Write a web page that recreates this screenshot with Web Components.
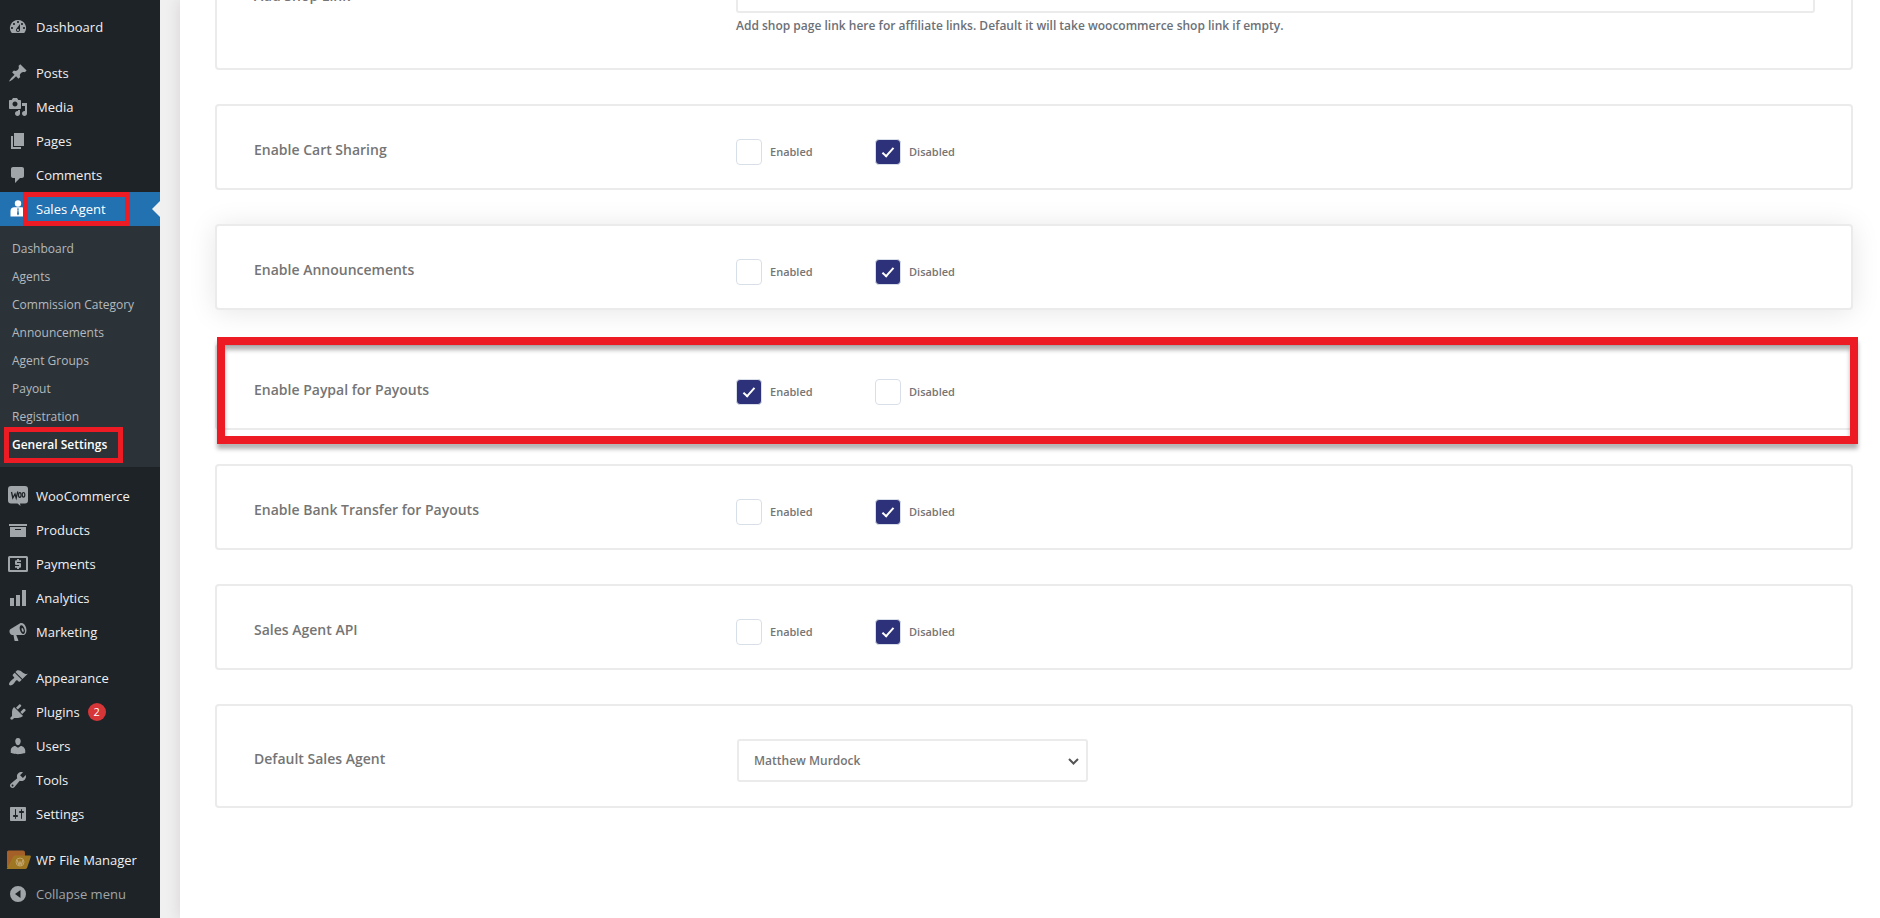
<!DOCTYPE html>
<html lang="en">
<head>
<meta charset="utf-8">
<title>Sales Agent – General Settings</title>
<style>
body { margin: 0; font-family: "Open Sans", "Noto Sans", sans-serif; background: #fff; }
</style>
</head>
<body>
<settings-app></settings-app>

<script>
const ICONS = {
  dashboard: '<path d="M3.76 16h12.48A7.998 7.998 0 0 0 10 3a7.998 7.998 0 0 0-6.24 13zM10 4c.55 0 1 .45 1 1s-.45 1-1 1-1-.45-1-1 .45-1 1-1zM6 6c.55 0 1 .45 1 1s-.45 1-1 1-1-.45-1-1 .45-1 1-1zm8 0c.55 0 1 .45 1 1s-.45 1-1 1-1-.45-1-1 .45-1 1-1zm-5.370 5.550L12 7v6c0 1.100-.9 2-2 2s-2-.9-2-2c0-.57.24-1.080.63-1.450zM4 10c.55 0 1 .45 1 1s-.45 1-1 1-1-.45-1-1 .45-1 1-1zm12 0c.55 0 1 .45 1 1s-.45 1-1 1-1-.45-1-1 .45-1 1-1zm-5 3c0-.55-.45-1-1-1s-1 .45-1 1 .45 1 1 1 1-.45 1-1z"/>',
  post: '<path d="M10.44 3.02l1.82-1.82 6.36 6.35-1.83 1.82c-1.05-.68-2.48-.57-3.41.36l-.75.75c-.92.93-1.04 2.35-.35 3.41l-1.83 1.82-2.41-2.41-2.8 2.79c-.42.42-3.38 2.71-3.8 2.29s1.86-3.39 2.28-3.81l2.79-2.79L4.1 9.36l1.83-1.82c1.05.69 2.48.57 3.4-.36l.75-.75c.93-.92 1.05-2.35.36-3.41z"/>',
  media: '<path fill-rule="evenodd" d="M13 11V4c0-.55-.45-1-1-1h-1.670L9 1H5L3.670 3H2c-.55 0-1 .45-1 1v7c0 .55.450 1 1 1h10c.55 0 1-.45 1-1zM7 4.500c1.380 0 2.500 1.120 2.500 2.500S8.380 9.500 7 9.500 4.500 8.380 4.500 7 5.620 4.500 7 4.500zM14 6h5v10.500c0 1.380-1.120 2.500-2.500 2.500S14 17.880 14 16.500s1.120-2.500 2.500-2.500c.17 0 .34.020.5.050V9h-3V6zm-4 8.050V13h2v3.500c0 1.380-1.120 2.500-2.500 2.500S7 17.880 7 16.500 8.120 14 9.500 14c.17 0 .34.020.5.050z"/>',
  page: '<path d="M6 15V2h10v13H6zm-1 1h8v2H3V5h2v11z"/>',
  comments: '<path d="M5 2h9c1.100 0 2 .9 2 2v7c0 1.100-.9 2-2 2h-2l-5 5v-5H5c-1.100 0-2-.9-2-2V4c0-1.100.9-2 2-2z"/>',
  agent: '<circle cx="10" cy="4.500" r="3.200"/><path fill-rule="evenodd" d="M2.500 17.500v-5.500q0-3.500 4-3.700h7q4 .2 4 3.700v5.500zM9 9.500l.6 1.500-.6 4 1 1.500 1-1.500-.6-4 .6-1.500z"/>',
  woo: '<path fill-rule="evenodd" d="M3 0h14q3 0 3 3v11.500q0 3-3 3h-5l.5 2.500-3-2.500H3q-3 0-3-3V3q0-3 3-3z"/><path fill="none" stroke="#1d2327" stroke-width="1.300" d="M3.500 6l1.300 6 2.200-4 1.200 4L9.800 5.500"/><ellipse fill="none" stroke="#1d2327" stroke-width="1.200" cx="11.800" cy="9" rx="1.300" ry="2.300"/><ellipse fill="none" stroke="#1d2327" stroke-width="1.200" cx="15.500" cy="8.800" rx="1.300" ry="2.300"/>',
  products: '<path d="M19 4v2H1V4h18zM2 7h16v10H2V7zm11 3V9H7v1h6z"/>',
  payments: '<path fill-rule="evenodd" d="M1.500 2h17q1.500 0 1.500 1.500v13q0 1.500-1.500 1.500h-17Q0 18 0 16.500v-13Q0 2 1.500 2zM2 4v12h16V4z"/><path d="M9 5h2v1.300h2v1.700H9v1h3q1 0 1 1v2.700q0 1-1 1h-1V15H9v-1.300H7V12h4v-1H8q-1 0-1-1V7.300q0-1 1-1h1z"/>',
  chart: '<path d="M18 18V2h-4v16h4zm-6 0V7H8v11h4zm-6 0v-8H2v8h4z"/>',
  marketing: '<path fill-rule="evenodd" d="M18.150 5.940c.46 1.620.38 3.220-.02 4.480-.42 1.280-1.260 2.180-2.300 2.480-.16.060-.26.060-.4.060-.06.020-.12.020-.18.020-.06.020-.14.020-.22.020h-6.800l2.220 5.500c.02.140-.06.260-.14.340-.08.100-.24.160-.34.160H6.950c-.1 0-.26-.06-.34-.16-.08-.08-.16-.2-.14-.34l-1-5.500H4.250l-.02-.02c-.5.060-1.080-.18-1.540-.62s-.88-1.080-1.060-1.880c-.24-.8-.2-1.560-.02-2.200.18-.62.580-1.080 1.060-1.300l.02-.02 9-5.400c.1-.06.18-.1.240-.16.06-.04.14-.08.240-.12.16-.08.28-.12.500-.18 1.040-.3 2.240.1 3.220.980s1.840 2.240 2.260 3.860zm-2.580 5.980c.34-.08.640-.3.860-.580.460-.68.640-1.840.440-3.180-.34-2.340-1.800-4.540-3.280-4.960-.4-.1-.8 0-1.100.26-.82.640-1.080 2.500-.5 4.520.64 2.220 2.180 4.240 3.580 3.940zm.1-3.900q.4 1.700-.5 2-1 0-1.500-1.900t.4-2.100q1 0 1.600 2z"/>',
  appearance: '<path d="M14.480 11.060L7.410 3.990l1.500-1.500c.5-.56 2.300-.47 3.510.32 1.210.8 1.430 1.280 2.910 2.100 1.180.64 2.450 1.260 4.450.85zm-.71.71L6.700 4.700 4.930 6.470c-.39.390-.39 1.020 0 1.410l1.060 1.060c.39.390.39 1.030 0 1.420-.6.600-1.430 1.110-2.210 1.690-.35.260-.7.530-1.010.840C1.430 14.230.4 16.080 1.400 17.070c.99 1 2.840-.03 4.180-1.360.31-.31.58-.66.850-1.020.57-.78 1.080-1.610 1.690-2.210.39-.39 1.020-.39 1.410 0l1.060 1.060c.39.390 1.020.390 1.410 0z"/>',
  plugins: '<path d="M13.110 4.360L9.870 7.600 8 5.730l3.240-3.240c.35-.34 1.050-.2 1.560.32.52.51.66 1.210.31 1.550zm-8 1.770l.91-1.120 9.010 9.010-1.190.84c-.71.71-2.630 1.160-3.820 1.160H6.140L4.900 17.260c-.59.590-1.540.590-2.120 0-.59-.58-.59-1.530 0-2.120l1.240-1.240v-3.880c0-1.130.4-3.190 1.090-3.890zm7.260 3.970l3.240-3.240c.34-.35 1.040-.21 1.550.31.52.51.660 1.210.310 1.550l-3.240 3.250z"/>',
  users: '<path d="M10 9.250c-2.270 0-2.730-3.440-2.730-3.440C7 4.020 7.820 2 9.970 2c2.160 0 2.980 2.020 2.710 3.810 0 0-.41 3.440-2.680 3.440zm0 2.570L12.720 10c2.390 0 4.520 2.330 4.520 4.530v2.490s-3.650 1.130-7.240 1.130c-3.650 0-7.240-1.130-7.240-1.130v-2.490c0-2.250 1.940-4.480 4.470-4.480z"/>',
  tools: '<path d="M16.680 9.770c-1.340 1.340-3.300 1.670-4.950.990l-5.410 6.520c-.99.990-2.590.990-3.580 0s-.99-2.590 0-3.570l6.520-5.420c-.68-1.650-.35-3.610.99-4.950 1.280-1.280 3.120-1.620 4.720-1.060l-2.890 2.890 2.820 2.820 2.860-2.870c.53 1.580.18 3.390-1.080 4.650zM3.810 16.210c.4.390 1.040.390 1.430 0 .4-.4.4-1.040 0-1.430-.39-.4-1.030-.4-1.430 0-.39.390-.39 1.030 0 1.430z"/>',
  settings: '<path fill-rule="evenodd" d="M18 16V4c0-.55-.45-1-1-1H3c-.55 0-1 .45-1 1v12c0 .55.450 1 1 1h14c.55 0 1-.45 1-1zM8 11h1c.55 0 1 .450 1 1s-.45 1-1 1H8v1.500c0 .28-.22.5-.5.500s-.5-.22-.5-.5V13H6c-.55 0-1-.45-1-1s.45-1 1-1h1V5.500c0-.28.220-.5.500-.5s.5.220.5.500V11zm5-2h-1c-.55 0-1-.45-1-1s.45-1 1-1h1V5.500c0-.28.220-.5.500-.5s.5.220.5.500V7h1c.55 0 1 .450 1 1s-.45 1-1 1h-1v5.500c0 .28-.22.5-.5.500s-.5-.22-.5-.5V9z"/>',
  files: '<path fill="#a5602a" d="M-1 2q0-1.500 1.500-1.500H15q2 0 2 2V17H-1z"/><path fill="#9f7622" d="M5 7q.6-1.500 2-1.500h15q1.200 0 .8 1.500L19 18q-.5 1-2 1H-1q-.5 0 0-1z"/><circle cx="12" cy="12" r="4" fill="none" stroke="#c1a56c"/><path fill="none" stroke="#c1a56c" stroke-width="1.300" d="M9 10l2 5 1-3 1.200 3 1.800-5"/>',
  collapse: '<path fill-rule="evenodd" d="M10 2a8 8 0 1 0 0 16 8 8 0 0 0 0-16zM12.500 6v8L7 10z"/>'
};

function define(name, html, setup) {
  const tpl = document.createElement('template');
  tpl.innerHTML = html;
  customElements.define(name, class extends HTMLElement {
    connectedCallback() {
      if (this.shadowRoot) return;
      this.attachShadow({ mode: 'open' }).append(tpl.content.cloneNode(true));
      if (setup) setup(this, this.shadowRoot);
    }
  });
}

define('nav-item', `
<style>
:host { display: block; }
a { position: relative; display: flex; align-items: center; height: 34px; padding-left: 8px; gap: 8px;
    color: #f0f0f1; font-size: 13px; line-height: 18px; text-decoration: none; white-space: nowrap; }
svg { width: 20px; height: 20px; fill: #a0a5aa; overflow: visible; flex: none; }
:host([icon="agent"]) svg { fill: #fff; }
:host([current]) a { background: #2271b1; color: #fff; }
:host([current]) a::after { content: ""; position: absolute; right: 0; top: 9px; border: 8px solid transparent; border-left-width: 0; border-right-color: #f0f0f1; }
:host([muted]) a { color: #a0a5aa; }
:host([marked]) a::before { content: ""; position: absolute; left: 23px; top: 0; width: 97px; height: 24px; border: 5px solid #ed1c24; }
</style>
<a href="#"><svg viewBox="0 0 20 20" aria-hidden="true"></svg><slot></slot></a>`,
(el, root) => { root.querySelector('svg').innerHTML = ICONS[el.getAttribute('icon')]; });

define('nav-sub', `
<style>
:host { display: block; }
a { position: relative; display: block; padding: 5px 12px; color: #b4b9be; font-size: 12px; line-height: 18px; text-decoration: none; white-space: nowrap; }
:host([current]) a { color: #fff; font-weight: 600; }
:host([current]) a::before { content: ""; position: absolute; left: 4px; top: -4px; width: 109px; height: 26px; border: 5px solid #ed1c24; }
</style>
<a href="#"><slot></slot></a>`);

define('count-badge', `
<style>
:host { display: inline-block; min-width: 18px; height: 18px; border-radius: 9px; background: #d63638; color: #fff;
  font-size: 11px; line-height: 18px; text-align: center; }
</style><slot></slot>`);

define('admin-menu', `
<style>
:host { display: block; box-sizing: border-box; width: 160px; padding: 10px 0 7px; background: #1d2327; flex: none; }
.group { margin-bottom: 12px; }
.group:last-child { margin-bottom: 0; }
.sub { background: #2c3338; padding: 9px 0 8px; }
</style>
<nav>
  <div class="group"><nav-item icon="dashboard">Dashboard</nav-item></div>
  <div class="group">
    <nav-item icon="post">Posts</nav-item>
    <nav-item icon="media">Media</nav-item>
    <nav-item icon="page">Pages</nav-item>
    <nav-item icon="comments">Comments</nav-item>
    <nav-item icon="agent" current marked>Sales Agent</nav-item>
    <div class="sub">
      <nav-sub>Dashboard</nav-sub>
      <nav-sub>Agents</nav-sub>
      <nav-sub>Commission Category</nav-sub>
      <nav-sub>Announcements</nav-sub>
      <nav-sub>Agent Groups</nav-sub>
      <nav-sub>Payout</nav-sub>
      <nav-sub>Registration</nav-sub>
      <nav-sub current>General Settings</nav-sub>
    </div>
  </div>
  <div class="group">
    <nav-item icon="woo">WooCommerce</nav-item>
    <nav-item icon="products">Products</nav-item>
    <nav-item icon="payments">Payments</nav-item>
    <nav-item icon="chart">Analytics</nav-item>
    <nav-item icon="marketing">Marketing</nav-item>
  </div>
  <div class="group">
    <nav-item icon="appearance">Appearance</nav-item>
    <nav-item icon="plugins">Plugins<count-badge>2</count-badge></nav-item>
    <nav-item icon="users">Users</nav-item>
    <nav-item icon="tools">Tools</nav-item>
    <nav-item icon="settings">Settings</nav-item>
  </div>
  <div class="group">
    <nav-item icon="files">WP File Manager</nav-item>
    <nav-item icon="collapse" muted>Collapse menu</nav-item>
  </div>
</nav>`);

define('setting-card', `
<style>
:host { position: relative; display: grid; grid-template-columns: 482px 1fr; box-sizing: border-box; min-height: 86px;
  padding: 33px 36px 23px 37px; border: 2px solid #ebebeb; border-radius: 4px; background: #fff; }
:host([raised]) { box-shadow: 0 2px 28px rgba(0,0,0,.1); }
.label { padding-top: 1px; color: #757575; font-size: 14px; line-height: 20px; font-weight: 600; }
:host([tall]) { padding-bottom: 24px; }
:host([tall]) .label { padding-top: 10px; }
:host(.first) .label { padding-top: 16px; }
:host([marked])::after { content: ""; position: absolute; left: 0; right: -7px; top: -9px; height: 91px; border: 8px solid #ed1c24;
  filter: drop-shadow(0 5px 2px rgba(0,0,0,.3)); pointer-events: none; }
</style>
<div class="label"></div><div><slot></slot></div>`,
(el, root) => { root.querySelector('.label').textContent = el.getAttribute('label'); });

define('check-option', `
<style>
:host { display: block; }
label { display: flex; align-items: center; gap: 8px; color: #757575; font-size: 11px; line-height: 18px; font-weight: 600; }
input { appearance: none; box-sizing: border-box; width: 26px; height: 26px; margin: 0; border: 1px solid #d9dfe8; border-radius: 4px; background: #fff; display: grid; place-items: center; }
input:checked { background: #2c3179; }
input:checked::after { content: ""; box-sizing: border-box; width: 6px; height: 12px; border: solid #fff; border-width: 0 2px 2px 0; transform: translateY(-1px) rotate(42deg); }
</style>
<label><input type="checkbox"><slot></slot></label>`);

define('toggle-pair', `
<style>:host { display: grid; grid-template-columns: 139px auto; justify-content: start; }</style>
<check-option class="on">Enabled</check-option><check-option class="off">Disabled</check-option>`,
(el, root) => {
  root.querySelector(el.hasAttribute('on') ? '.on' : '.off').shadowRoot.querySelector('input').checked = true;
});

define('link-field', `
<style>
:host { display: block; }
input { display: block; box-sizing: border-box; width: 100%; height: 43px; border: 2px solid #ebebeb; border-radius: 3px; background: #fff; padding: 0 15px; font: inherit; }
p { margin: 3px 0 0; color: #6c7178; font-size: 12px; line-height: 20px; font-weight: 600; }
</style>
<input type="text" aria-label="Add Shop Link">
<p>Add shop page link here for affiliate links. Default it will take woocommerce shop link if empty.</p>`);

define('agent-select', `
<style>
:host { display: block; position: relative; width: 351px; margin-left: 1px; }
select { appearance: none; display: block; box-sizing: border-box; width: 100%; height: 43px; padding: 0 32px 0 15px; border: 2px solid #ebebeb; border-radius: 3px;
  background: #fff; color: #757575; font: 600 12px/20px "Open Sans", "Noto Sans", sans-serif; }
svg { position: absolute; right: 9px; top: 19px; width: 11px; height: 7px; fill: none; stroke: #555; stroke-width: 2; }
</style>
<select aria-label="Default Sales Agent"><option>Matthew Murdock</option></select>
<svg viewBox="0 0 11 7" aria-hidden="true"><path d="M1 1l4.500 4.500L10 1"/></svg>`);

define('settings-app', `
<style>
:host { display: flex; align-items: stretch; min-height: 100vh; overflow: hidden; }
main { flex: 1; box-sizing: border-box; padding: 0 27px 0 35px; margin-left: 20px; min-width: 0; background: #fff; box-shadow: 0 0 14px rgba(80,40,40,.15); display: flex; flex-direction: column; gap: 34px; }
.page { display: flex; flex: 1; background: #f0f0f1; min-width: 0; overflow: hidden; }
.first { margin-top: -74px; padding: 42px 36px 32px 37px; }
admin-menu { z-index: 1; }
</style>
<admin-menu></admin-menu>
<div class="page"><main>
  <setting-card class="first" label="Add Shop Link"><link-field></link-field></setting-card>
  <setting-card label="Enable Cart Sharing"><toggle-pair></toggle-pair></setting-card>
  <setting-card label="Enable Announcements" raised><toggle-pair></toggle-pair></setting-card>
  <setting-card label="Enable Paypal for Payouts" marked><toggle-pair on></toggle-pair></setting-card>
  <setting-card label="Enable Bank Transfer for Payouts"><toggle-pair></toggle-pair></setting-card>
  <setting-card label="Sales Agent API"><toggle-pair></toggle-pair></setting-card>
  <setting-card label="Default Sales Agent" tall><agent-select></agent-select></setting-card>
</main></div>
`);
</script>
</body>
</html>
